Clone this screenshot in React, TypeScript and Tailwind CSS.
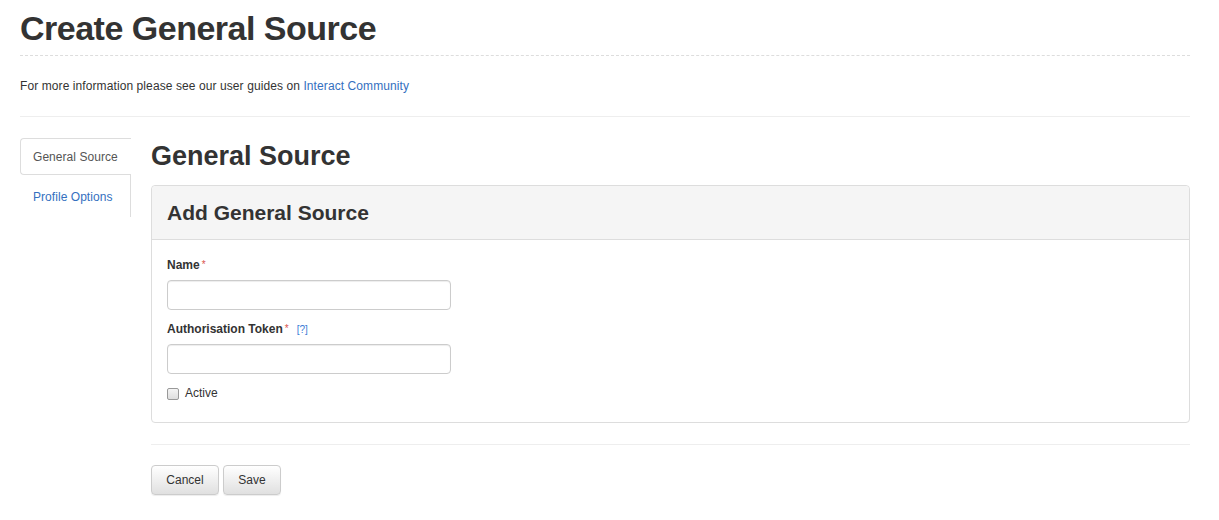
import React from "react";

export default function App() {
  return (
    <div
      className="min-h-[520px] bg-white text-[#333] text-[12px] leading-[17px]"
      style={{ fontFamily: '"Liberation Sans", Arial, sans-serif' }}
    >
      <div className="ml-5 w-[1170px]">
        <div className="border-b border-dashed border-[#ddd] pt-2 pb-[7px]">
          <h1 className="text-[34px] leading-[40px] font-bold tracking-[-0.5px] text-[#333]">
            Create General Source
          </h1>
        </div>
        <p className="mt-[22px] h-[17px] tracking-[0.09px]">
          For more information please see our user guides on{" "}
          <a className="text-[#3470c0]">Interact Community</a>
        </p>
        <div className="mt-[21px] border-t border-[#eee]" />

        <div className="mt-[21px] flex gap-5">
          <ul className="w-[111px] shrink-0 self-start border-r border-[#ddd]">
            <li className="relative -mr-px flex h-[37px] items-center rounded-l-[4px] border border-r-0 border-[#ddd] bg-white pl-3 pt-[1px] text-[#555] tracking-[0.05px]">
              General Source
            </li>
            <li className="flex h-[42px] items-center pl-[13px] pt-[3px] text-[#3470c0] tracking-[0.05px]">
              Profile Options
            </li>
          </ul>

          <div className="flex-1">
            <h2 className="mt-[3px] text-[27px] leading-[30px] font-bold text-[#333]">
              General Source
            </h2>
            <div className="mt-[14px] rounded-[4px] border border-[#ddd] bg-white">
              <div className="rounded-t-[4px] border-b border-[#ddd] bg-[#f5f5f5] px-[15px] py-[15px]">
                <h3 className="text-[21px] leading-[23px] font-bold text-[#333]">
                  Add General Source
                </h3>
              </div>
              <div className="px-[15px] pt-[17px] pb-[20px]">
                <div className="flex h-[17px] items-center font-bold">
                  Name
                  <span className="ml-[2px] -mt-[2px] text-[10px] font-normal text-[#d9534f]">*</span>
                </div>
                <div className="mt-[6px] h-[30px] w-[284px] rounded-[4px] border border-[#ccc] bg-white shadow-[inset_0_1px_1px_rgba(0,0,0,0.075)]" />
                <div className="mt-[11px] flex h-[17px] items-center font-bold">
                  Authorisation Token
                  <span className="ml-[2px] -mt-[2px] text-[10px] font-normal text-[#d9534f]">*</span>
                  <span className="ml-[8px] text-[10px] font-normal text-[#3a7bd5]">[?]</span>
                </div>
                <div className="mt-[6px] h-[30px] w-[284px] rounded-[4px] border border-[#ccc] bg-white shadow-[inset_0_1px_1px_rgba(0,0,0,0.075)]" />
                <div className="mt-[11px] flex h-[17px] items-center">
                  <span className="h-[12px] w-[12px] rounded-[2px] border border-[#999] bg-gradient-to-b from-[#f4f4f4] to-[#dedede]" />
                  <span className="ml-[6px]">Active</span>
                </div>
              </div>
            </div>
            <div className="mt-[21px] border-t border-[#eee]" />
            <div className="mt-[20px] flex gap-[4px]">
              <button className="flex h-[30px] w-[68px] items-center justify-center rounded-[4px] border border-[#ccc] bg-gradient-to-b from-white to-[#e0e0e0] text-[#333] shadow-[0_1px_1px_rgba(0,0,0,0.075)]">
                Cancel
              </button>
              <button className="flex h-[30px] w-[58px] items-center justify-center rounded-[4px] border border-[#ccc] bg-gradient-to-b from-white to-[#e0e0e0] text-[#333] shadow-[0_1px_1px_rgba(0,0,0,0.075)]">
                Save
              </button>
            </div>
          </div>
        </div>
      </div>
    </div>
  );
}
